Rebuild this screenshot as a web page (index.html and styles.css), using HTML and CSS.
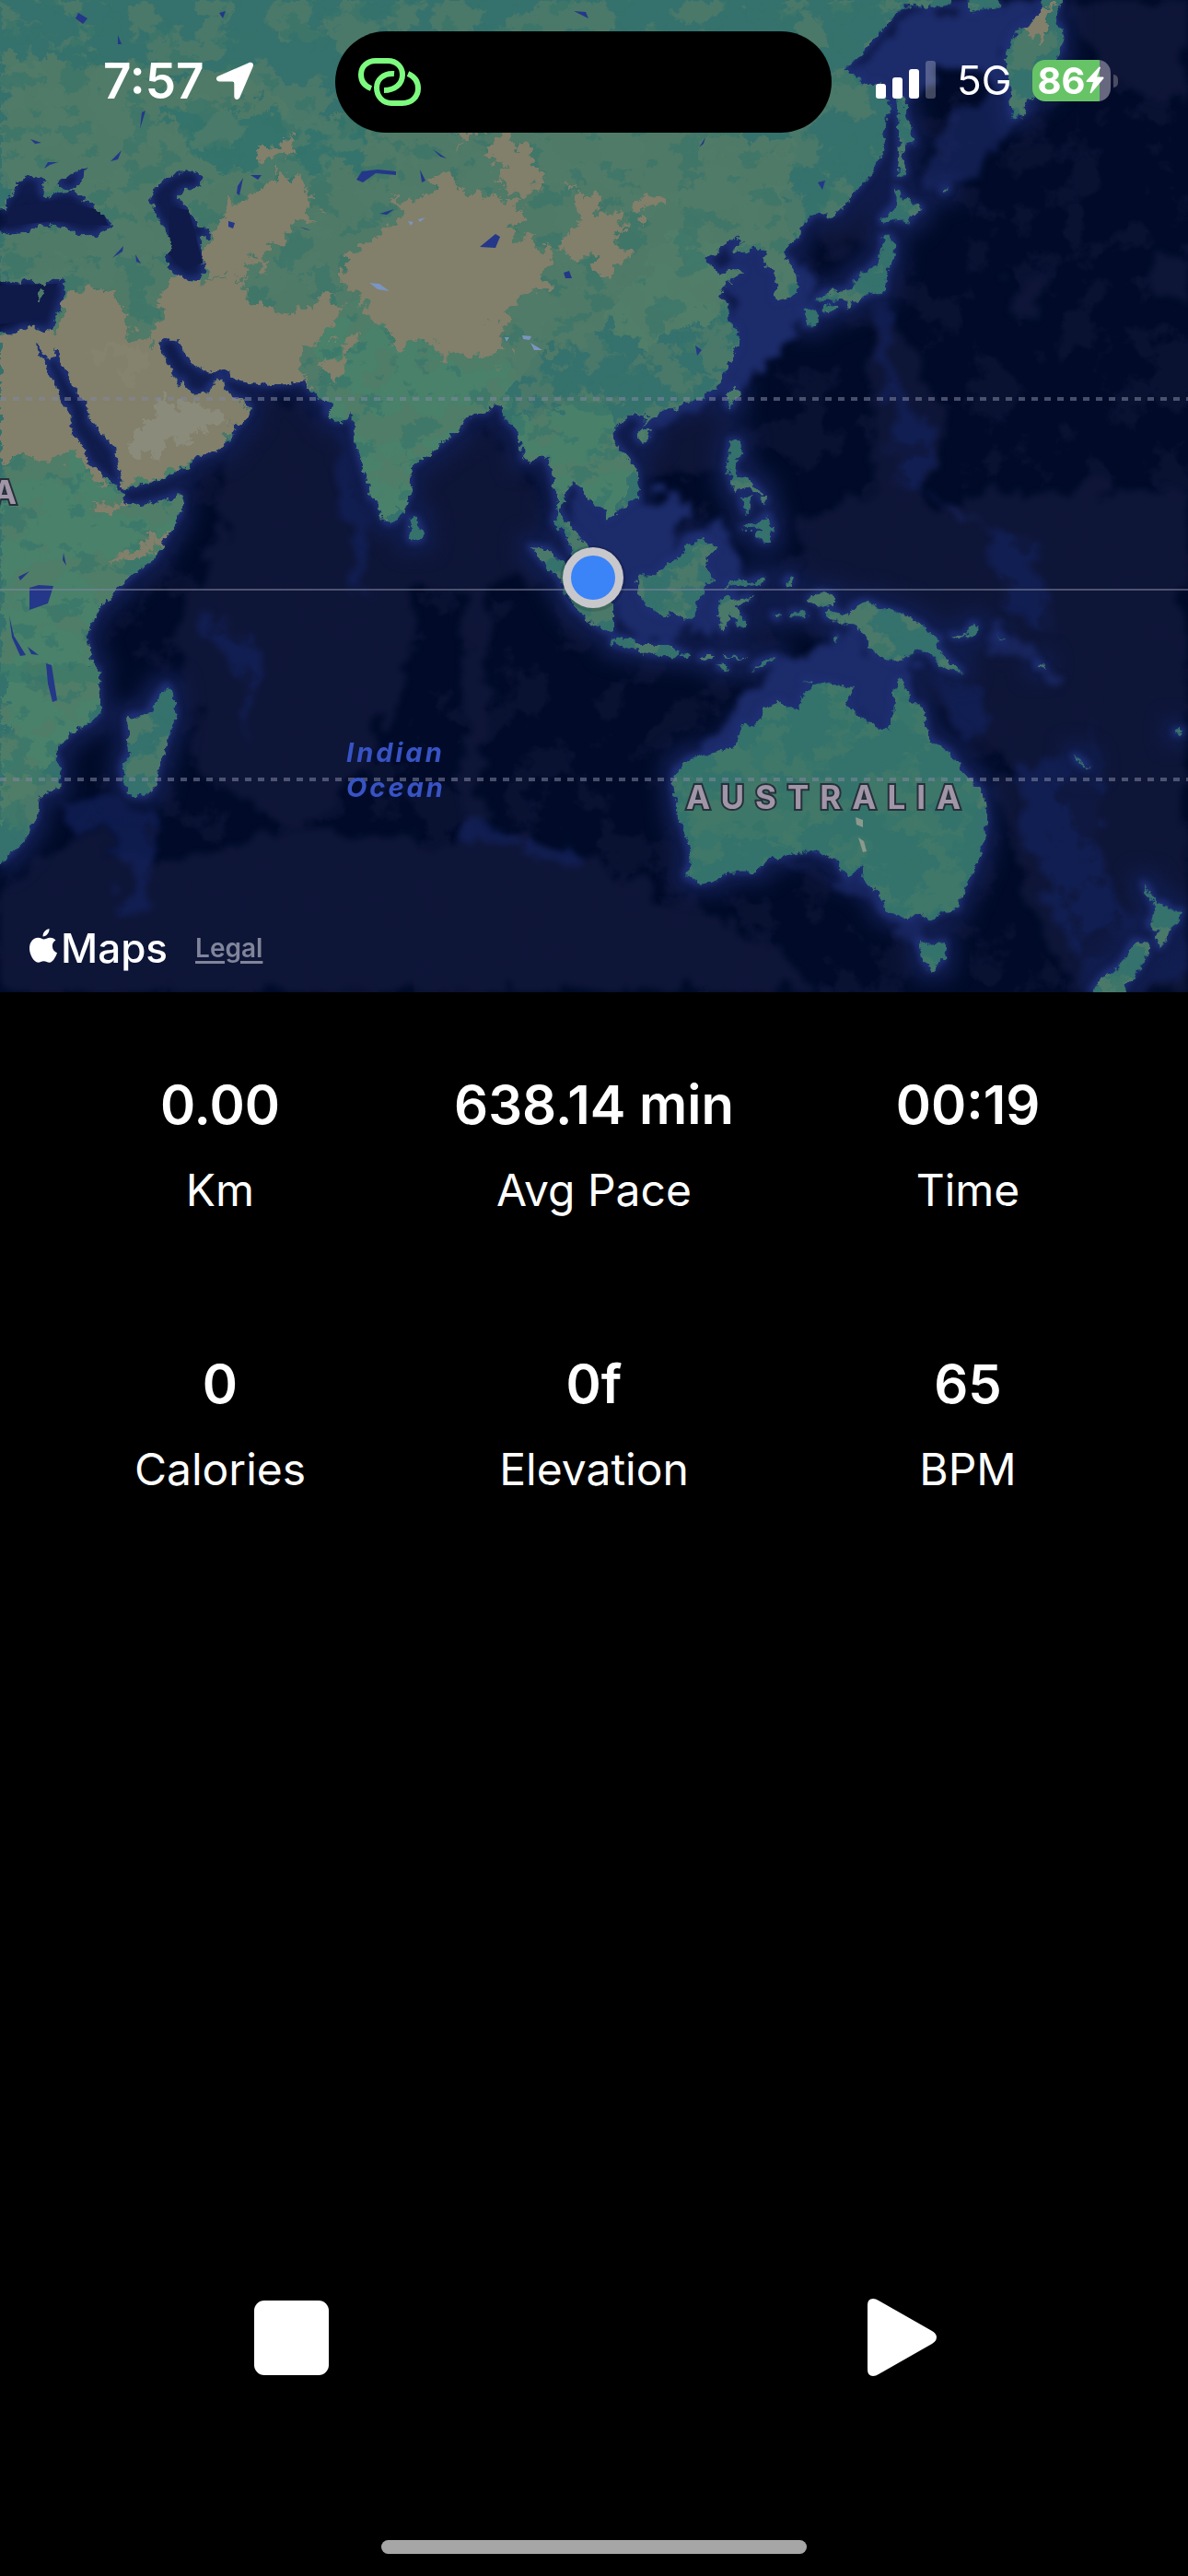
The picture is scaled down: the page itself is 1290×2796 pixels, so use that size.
FILE: index.html
```html
<!DOCTYPE html>
<html lang="en">
<head>
<meta charset="utf-8">
<meta name="viewport" content="width=device-width, initial-scale=1">
<title>Workout</title>
<link rel="stylesheet" href="styles.css">
</head>
<body>
<main class="screen">
  <section class="map" aria-label="Map">
    <svg class="map-canvas" viewBox="0 0 1290 1077" preserveAspectRatio="xMidYMid slice">
      <defs>
        <filter id="coast" x="0" y="0" width="1290" height="1077" filterUnits="userSpaceOnUse" color-interpolation-filters="sRGB">
          <feTurbulence type="fractalNoise" baseFrequency="0.12" numOctaves="3" seed="4"/>
          <feDisplacementMap in="SourceGraphic" scale="11" xChannelSelector="R" yChannelSelector="G"/>
        </filter>
        <filter id="shelf" x="0" y="0" width="1290" height="1077" filterUnits="userSpaceOnUse" color-interpolation-filters="sRGB">
          <feMorphology in="SourceAlpha" operator="dilate" radius="3"/>
          <feGaussianBlur stdDeviation="3" result="b"/>
          <feFlood flood-color="#1e2f74"/>
          <feComposite in2="b" operator="in"/>
        </filter>
        <filter id="slope" x="0" y="0" width="1290" height="1077" filterUnits="userSpaceOnUse" color-interpolation-filters="sRGB">
          <feMorphology in="SourceAlpha" operator="dilate" radius="14"/>
          <feGaussianBlur stdDeviation="9" result="b"/>
          <feFlood flood-color="#101c4c"/>
          <feComposite in2="b" operator="in"/>
        </filter>
        <filter id="soft" x="0" y="0" width="1290" height="1077" filterUnits="userSpaceOnUse" color-interpolation-filters="sRGB">
          <feTurbulence type="fractalNoise" baseFrequency="0.03" numOctaves="4" seed="9" result="n"/>
          <feDisplacementMap in="SourceGraphic" in2="n" scale="50" xChannelSelector="R" yChannelSelector="G"/>
          <feGaussianBlur stdDeviation="3"/>
        </filter>
        <filter id="rough" x="0" y="0" width="1290" height="1077" filterUnits="userSpaceOnUse" color-interpolation-filters="sRGB">
          <feTurbulence type="fractalNoise" baseFrequency="0.045" numOctaves="4" seed="12"/>
          <feDisplacementMap in="SourceGraphic" scale="45" xChannelSelector="R" yChannelSelector="G"/>
        </filter>
        <filter id="grass" x="0" y="0" width="1290" height="1077" filterUnits="userSpaceOnUse" color-interpolation-filters="sRGB">
          <feTurbulence type="fractalNoise" baseFrequency="0.02 0.025" numOctaves="5" seed="21"/>
          <feColorMatrix values="0 0 0 0 .32  0 0 0 0 .49  0 0 0 0 .41  22 0 0 0 -11"/>
        </filter>
        <filter id="forest" x="0" y="0" width="1290" height="1077" filterUnits="userSpaceOnUse" color-interpolation-filters="sRGB">
          <feTurbulence type="fractalNoise" baseFrequency="0.03 0.04" numOctaves="4" seed="5"/>
          <feColorMatrix values="0 0 0 0 .2  0 0 0 0 .45  0 0 0 0 .42  0 26 0 0 -15"/>
        </filter>
        <filter id="seabed" x="0" y="0" width="1290" height="1077" filterUnits="userSpaceOnUse" color-interpolation-filters="sRGB">
          <feTurbulence type="fractalNoise" baseFrequency="0.02" numOctaves="5" seed="31"/>
          <feColorMatrix values="0 0 0 0 .06  0 0 0 0 .085  0 0 0 0 .22  9 0 0 0 -4.8"/>
        </filter>
        <g id="land">
          <svg x="0" y="0" width="430" height="540" viewBox="0 0 1290 1568" preserveAspectRatio="none" overflow="visible">
            <path fill-rule="evenodd" d="M-30-30H1293V1571H1208L1190 1500 1165 1420 1150 1350 1148 1310 1137 1290 1130 1320 1100 1328 1060 1295 1085 1275 1050 1262 1010 1225 988 1200 930 1208 870 1212 800 1200 748 1190 745 1160 728 1157 700 1168 665 1168 610 1130 575 1070 540 1065 515 1080 522 1110 545 1150 565 1180 580 1218 595 1190 605 1230 640 1242 670 1238 700 1200 722 1185 728 1220 755 1248 790 1258 815 1285 800 1310 765 1350 745 1385 700 1418 625 1445 610 1468 520 1505 440 1530 398 1540 385 1480 370 1410 330 1365 288 1320 285 1280 235 1210 190 1130 178 1092 165 1130 150 1128 120 1080 110 1085 140 1130 170 1195 195 1265 225 1290 235 1365 265 1405 290 1460 345 1510 388 1540 395 1571H-30V1048L45 1050 80 1030 165 1043 180 1000 205 940 205 875 175 880 130 895 90 872 60 888-30 872Z
            M-30 660L18 655 18 625 45 600 50 570 100 545 115 560 150 565 130 585 145 620 190 603 235 600 290 635 350 685 355 715 315 738 260 738 190 712 130 706 80 730 30 738-30 720Z
            M178 568L240 540 290 524 262 560 250 590 222 595 210 592 185 585Z
            M485 618L510 580 560 548 610 530 650 545 652 590 600 595 575 622 600 640 610 670 635 685 640 708 665 705 688 745 648 750 660 790 665 865 640 880 600 878 540 840 540 800 558 765 545 740 520 700 500 660Z"/>
            <path d="M113 925L130 915 147 925 130 942ZM550 1571L575 1555 592 1571Z"/>
          </svg>
          <svg x="430" y="0" width="430" height="540" viewBox="0 0 1290 1568" preserveAspectRatio="none" overflow="visible">
            <path d="M-3-30H1293V760L1275 765 1258 790 1270 815 1293 830V925L1240 945 1232 930 1235 870 1225 845 1198 835 1205 785 1160 778 1125 795 1100 790 1125 755 1100 742 1060 768 1045 795 1000 812 1030 835 1045 860 1095 845 1128 855 1075 890 1047 928 1080 970 1085 1010 1112 1040 1112 1090 1075 1160 1045 1215 1000 1250 930 1272 850 1300 820 1315 805 1335 810 1305 772 1300 735 1325 702 1360 712 1395 765 1455 785 1490 790 1571H630L600 1530 575 1515 555 1540 548 1571H522L512 1520 500 1470 475 1425 440 1450 412 1445 408 1400 390 1350 355 1320 345 1280 318 1268 290 1300 250 1300 220 1318 210 1345 140 1400 80 1445 45 1470 48 1540 38 1571H-3Z"/>
            <path d="M780 1370L800 1350 830 1350 822 1378 800 1393ZM1078 1240L1105 1215 1112 1240 1088 1285 1075 1265ZM1088 1385L1118 1390 1125 1430 1105 1450 1100 1490 1160 1520 1195 1560 1150 1535 1100 1545 1090 1510 1075 1470Z"/>
          </svg>
          <svg x="860" y="0" width="430" height="540" viewBox="0 0 1290 1568" preserveAspectRatio="none" overflow="visible">
            <path d="M-3-30H520L515 12 450 20 370 15 330 40 300 80 240 150 165 220 205 235 255 275 280 260 322 330 300 380 298 470 280 500 240 560 180 625 150 665 120 680 80 665 25 715 20 745-3 760ZM-3 830L15 870 12 915-3 925ZM335 290L368 310 370 370 398 450 370 450 355 480 370 545 338 555 348 480 345 400ZM335 590L370 630 425 655 400 670 375 700 350 695 320 680 298 705 288 690 320 660 335 640ZM290 745L315 742 335 770 330 810 310 850 300 920 270 920 230 935 170 970 180 945 120 940 65 950 110 918 185 910 210 870 250 850 285 810 292 780ZM30 975L60 965 80 990 65 1025 40 1025 50 1005ZM100 975L120 955 150 960 130 978 105 990ZM820-30H885L850 60 880 95 880 140 865 175 835 250 790 300 760 310 750 350 725 375 712 350 705 250 690 200 697 150 730 95 785 65 805 40ZM560-30H660L675 20 620 25 585 40ZM485 600L510 590 495 605Z"/>
          </svg>
          <svg x="0" y="540" width="430" height="540" viewBox="0 0 1290 1568" preserveAspectRatio="none" overflow="visible">
            <path d="M-30-3H395L415 25 480 18 550 0 592-3 590 40 540 120 500 190 430 240 370 295 315 350 280 430 300 530 320 545 325 675 290 710 235 735 175 795 195 850 190 910 125 938 120 1000 70 1080 0 1150H-30ZM1222-3L1245 60 1265 83 1293 70V-3ZM543 590L560 620 572 680 550 740 520 830 500 910 470 940 430 938 405 905 395 850 420 800 412 700 430 685 480 680 510 630Z"/>
          </svg>
          <svg x="430" y="540" width="430" height="540" viewBox="0 0 1290 1568" preserveAspectRatio="none" overflow="visible">
            <path d="M-3-3H38L20 50-3 65ZM45 60L65 65 87 110 82 130 55 138 40 120ZM520-3H540L532 40 565 90 625 155 640 210 600 200 565 165 555 120 512 75 525 40ZM638-3H780L725 35 685 70 680 35 645 20ZM435 152L490 158 560 220 640 290 705 330 705 420 690 425 640 395 580 345 545 290 530 250 480 205ZM700 455L715 437 760 445 800 462 880 462 920 480 915 498 850 495 780 480 720 465ZM930 488L950 492 945 500 930 498ZM985 505L1015 490 1035 500 1005 510ZM1065 497L1140 500 1110 507 1070 503ZM1045 525L1065 522 1082 540 1065 540ZM1160 540L1180 518 1245 497 1200 525ZM782 260L800 242 845 245 880 205 920 185 965 135 990 122 1010 140 1045 155 1010 180 1005 215 1035 262 1005 265 1000 300 975 335 965 380 930 378 900 360 870 370 820 350 790 300ZM1065 280L1080 265 1110 260 1150 268 1195 250 1190 268 1150 278 1100 272ZM1060 310L1080 308 1105 325 1155 308 1150 318 1100 340 1135 390 1120 405 1085 360 1070 420 1055 410 1055 375 1040 365ZM1265 270L1280 250 1293 255 1285 275ZM1122 95L1170 85 1210 50 1230 100 1205 140 1175 120 1185 95ZM1120-3H1150V20L1140 50 1130 30ZM1180-3H1205V20ZM1225 365L1250 370 1240 382ZM1293 1120L1210 1135 1160 1180 1080 1180 1020 1210 985 1215 940 1190 955 1160 955 1110 935 1040 915 990 900 900 910 860 960 820 1100 785 1125 710 1165 720 1195 665 1245 638 1293 665Z"/>
          </svg>
          <svg x="860" y="540" width="430" height="540" viewBox="0 0 1290 1568" preserveAspectRatio="none" overflow="visible">
            <path d="M-3 665L20 665 30 620 60 595 105 578 150 592 195 598 180 630 170 655 220 690 290 730 310 728 328 680 332 600 350 562 370 600 385 645 425 660 445 760 510 800 560 870 620 930 632 1020 615 1110 580 1190 545 1260 540 1295 490 1300 445 1330 410 1305 380 1330 300 1300 280 1245 240 1215 225 1190 235 1150 200 1180 178 1200 140 1135 60 1110-3 1120ZM410 1395L450 1408 498 1400 495 1450 455 1488 425 1455ZM50 320L95 297 135 310 135 338 90 338ZM100 360L120 348 180 375 200 340 240 325 290 345 350 362 430 405 435 420 485 445 465 460 510 515 558 552 490 535 450 490 410 478 370 495 350 515 320 510 260 480 235 425 200 400 155 390 110 378ZM510 430L560 435 590 395 602 405 585 432 540 442ZM-3 358L40 360 48 375-3 372ZM35 578L65 572 60 582ZM140 435L152 430 145 455ZM665 428L692 455 672 440ZM795 525L820 530 800 533ZM915 808L972 852 930 832ZM1245 735L1272 732 1268 745 1250 745ZM1140 1210L1160 1230 1180 1275 1205 1275 1235 1300 1270 1300 1255 1335 1230 1355 1215 1395 1195 1418 1185 1385 1195 1365 1158 1345 1178 1320 1175 1280ZM1115 1395L1160 1405 1155 1440 1120 1495 1085 1530 1070 1600H975V1558L1010 1510 1070 1470Z"/>
          </svg>
        </g>
        <mask id="on-land" class="alpha-mask" maskUnits="userSpaceOnUse" x="0" y="0" width="1290" height="1077"><use href="#land"/></mask>
      </defs>

      <rect width="1290" height="1077" fill="#010b29"/>
      <!-- mid-depth basins and ridges -->
      <g filter="url(#soft)" fill="#0e1638">
        <path d="M270 420L400 470 450 560 450 720 390 840 330 900 230 850 190 700 240 560Z"/>
        <path d="M430 470L560 480 590 620 520 640 440 640Z"/>
        <path d="M0 960L90 900 170 940 330 900 480 920 560 900 700 960 800 1000 900 1077H0Z"/>
        <path d="M505 640L530 640 525 960 500 960Z"/>
        <path d="M650 420L800 430 780 520 650 520ZM890 210L980 190 960 260 890 270Z"/>
        <path d="M940 320L990 360 1020 470 1000 540 1290 530V900L1150 880 1060 800 900 700 860 560 960 540Z"/>
        <path d="M1080 850L1290 850V1077H1170L1110 960ZM1160 0H1290V110L1200 90ZM1250 260L1290 300V330L1250 320ZM1100 305L1140 300 1120 345 1095 345Z"/>
        <path d="M880 700L1000 720 1010 780 900 770Z"/>
      </g>
      <g filter="url(#soft)" fill="#13215a" opacity=".75">
        <path d="M360 440L400 460 410 560 385 650 375 560ZM215 660L270 690 290 740 270 800 265 740 230 690Z"/>
        <path d="M940 320L965 330 975 420 1010 470 1000 540 975 520 965 430Z"/>
        <path d="M1070 560L1130 600 1140 680 1080 660ZM1100 820L1190 830 1200 960 1290 1010V1060L1190 1077 1120 940Z"/>
        <path d="M1010 700L1080 780 1060 810 1010 750ZM60 880L130 860 180 900 160 960 140 1010 130 920Z"/>
        <path d="M500 890L620 920 640 940 500 910ZM1140 0L1160 60H1130ZM1190 760L1195 920 1180 900Z"/>
      </g>
      <rect width="1290" height="1077" filter="url(#seabed)" opacity=".65"/>
      <use href="#land" filter="url(#slope)"/>
      <!-- shallow seas -->
      <g fill="#1c2b6a" filter="url(#soft)">
        <path d="M765 245L850 270 880 310 870 350 830 400 790 430 690 460 660 440 770 420 800 330Z"/>
        <path d="M615 520L700 540 750 530 730 600 790 560 810 650 770 680 700 700 660 650 625 590Z"/>
        <path d="M990 10L1140 0 1100 50 1095 110 1040 70 980 120 930 80Z"/>
        <path d="M820 740L900 700 930 690 990 710 980 790 930 780 840 790 740 850Z"/>
        <path d="M1000 520L1070 570 1040 560ZM1080 680L1150 725 1140 735 1080 700Z" opacity=".7"/>
        <path d="M740 920L830 930 940 960 1000 990 1010 1040 990 1020 900 950Z" opacity=".7"/>
        <path d="M1030 115L1120 105 1060 190 1000 215Z" opacity=".6"/>
      </g>
      <use href="#land" filter="url(#shelf)"/>
      <path d="M10 225L55 218 110 228 118 245 60 240 8 245ZM185 225L205 228 220 285 200 293 182 275ZM0 310L62 308 50 345 0 352Z" fill="#101a49"/>

      <g filter="url(#coast)">
        <g transform="translate(1 1)">
          <use href="#land" fill="#35716d"/>
          <g mask="url(#on-land)">
            <g filter="url(#rough)">
              <path d="M0 60L120 70 260 80 330 130 600 130 760 140 860 150 850 330 700 340 600 380 500 430 420 420 0 400Z" fill="#4e7a67"/>
              <path d="M330 350L400 320 560 390 540 470 440 560H380ZM0 470H220V620L0 900Z" fill="#49816a"/>
              <path d="M560 460L640 430 690 480 680 560H560Z" fill="#48806a"/>
              <path d="M730 250L800 260 780 340 700 370 650 350Z" fill="#507e69"/>
              <path d="M740 860L830 850 930 870 860 910 750 900ZM890 740L930 770 910 790ZM980 860L1030 840 1010 930Z" fill="#4a7c67" opacity=".8"/>
              <path d="M170 125L330 120 340 190 250 190ZM330 130L400 140 390 180 320 180Z" fill="#34746c"/>
            </g>
            <rect width="1290" height="840" filter="url(#grass)" opacity=".75"/>
            <rect width="1290" height="1077" filter="url(#forest)" opacity=".55"/>
            <path d="M0 720H600V760H730L1060 720V1077H640V740H0Z" fill="#34766a" opacity=".45"/>
            <g filter="url(#rough)" fill="#827f6b">
              <path d="M-20 361L50 358 70 331 90 312 117 317 133 334 143 358 170 365 170 331 190 303 227 300 240 293 260 296 267 313 293 331 310 344 330 334 355 322 370 327 347 365 327 379 327 413 345 430 233 450 273 444 233 495 147 527 133 530 117 482 120 530 100 510 80 496 50 503 27 492-20 510Z"/>
              <path d="M227 238L247 213 277 220 290 193 313 182 333 213 347 238 320 241 310 269 277 272 287 293 260 289 243 296 222 296 220 272 230 255ZM287 158L323 148 313 172 283 172Z"/>
              <path d="M377 275L400 255 430 241 430 213 463 207 480 193 500 196 500 210 567 210 553 248 573 262 600 272 593 293 603 310 557 317 550 341 540 355 557 382 547 393 490 382 450 368 430 376 403 337 373 306Z"/>
              <path d="M610 272L630 241 633 210 657 213 643 227 680 241 667 255 673 275 663 293 640 293 633 275ZM533 155L557 151 580 172 577 207 540 200 550 186 530 176ZM690 215L715 212 705 235 685 230ZM490 142L515 145 500 155ZM610 195L630 205 620 210Z"/>
              <path d="M147 588L180 579 167 605 120 604ZM105 540L133 540 125 555 110 555ZM350 385L385 362 370 400 350 415ZM1105 8L1145 5 1125 50Z"/>
            </g>
            <path d="M143 482L173 427 237 444 230 465 160 491Z" fill="#8b8b7b" filter="url(#rough)"/>
            <path d="M90 380L140 370 160 395 150 430 130 390Z" fill="#87866f" opacity=".6" filter="url(#rough)"/>
          </g>
        </g>
      </g>
      <g fill="#243789">
        <path d="M32 638L42 635 58 636 52 655 32 662ZM10 668L15 690 28 711 22 712 13 692ZM50 720L56 722 62 760 57 762 52 742ZM30 702L42 711 34 710ZM20 626L32 620 22 630ZM69 600L72 614 68 608ZM85 14L95 20 90 26 82 20ZM238 14L245 12 242 20ZM128 38L132 48 128 48ZM154 122L158 120 152 140ZM33 151L45 155 38 156ZM120 175L132 163 128 173ZM48 183L52 176 63 176 54 179ZM272 190L284 190 280 195ZM258 202L264 193 260 212 257 210ZM248 240L255 242 253 248 248 246ZM387 195L393 186 410 184 430 186V190L408 188 394 198ZM412 232L428 227 420 233ZM325 246L338 250 332 249ZM122 280L134 267 133 273ZM147 276L153 286 148 284ZM521 268L538 254 543 257 538 269ZM612 296L618 294 621 302 614 302ZM456 184L462 196 458 198ZM470 162L485 172 478 170ZM759 160L766 149 764 156ZM888 198L896 196 893 206ZM755 375L762 380 757 386ZM623 12L636 13 639 20Z"/>
      </g>
      <g fill="#7a95c0">
        <path d="M401 307L412 308 423 316 410 314ZM567 364L577 365 575 369 568 368ZM576 372L589 380 580 380ZM443 240L449 241 446 245ZM454 238L462 236 456 241ZM548 366L553 366 550 371Z"/>
        <path d="M929 887L937 890 937 898 930 895ZM932 909L938 913 941 924 937 925Z" fill="#8b9a8d"/>
      </g>
      <g stroke="#8287a0" stroke-opacity=".55" stroke-width="2" fill="none">
        <path d="M0 433H1290M0 846H1290" stroke-width="4" stroke-dasharray="7 7"/>
        <path d="M0 640H1290"/>
      </g>
      <g class="region">
        <text x="-8" y="547">A</text>
        <text class="region-wide" x="745" y="878">AUSTRALIA</text>
      </g>
      <g class="ocean">
        <text x="376" y="827">Indian</text>
        <text x="376" y="865">Ocean</text>
      </g>
      <circle cx="644" cy="628" r="36" fill="#000" opacity=".12"/>
      <circle cx="644" cy="627" r="33" fill="#c8c7cc"/>
      <circle cx="644" cy="627" r="24" fill="#3a84f8"/>
    </svg>

    <header class="status">
      <div class="status-left">
        <time class="clock">7:57</time>
        <svg class="arrow" viewBox="0 0 42 42" aria-hidden="true"><path fill="#fff" d="M36 1.200C39.500-.3 42 2 40.600 5.500L26.500 38.500C24.800 42.300 20.300 41.500 20.300 37.500V23.500Q20.300 21.500 18.300 21.500H4.500C.5 21.500-.5 17 3.300 15.400Z"/></svg>
      </div>
      <div class="island">
        <svg class="link" viewBox="0 0 70 56" fill="none" stroke="#7dfb7f" stroke-width="6" aria-hidden="true">
          <path d="M15 35C7 32 4 26 4 20 4 11 11 5 20 5H33C43 5 49 12 49 20 49 30 41 37 29 37"/>
          <path d="M40 19C28 18 21 26 21 34 21 44 28 51 37 51H49C59 51 66 44 66 35 66 28 62 22 55 19"/>
        </svg>
      </div>
      <div class="status-right">
        <svg class="signal" viewBox="0 0 65 42" fill="#fff" aria-hidden="true"><rect y="25" width="11" height="16" rx="3"/><rect x="18" y="18" width="11" height="23" rx="3"/><rect x="36" y="9" width="11" height="32" rx="3"/><rect x="54" width="11" height="41" rx="3" opacity=".25"/></svg>
        <span class="network">5G</span>
        <div class="battery">
          <span class="charge">86</span>
          <svg class="bolt" viewBox="0 0 20 30" aria-hidden="true"><path fill="#fff" d="M14.500.5L.8 15.500Q0 17 1.500 17H8L4.500 28.500Q5 30 6.500 28.500L19.500 13Q20 11.500 18.500 11.500H12L16 1.500Q15.500 0 14.500.5Z"/></svg>
        </div>
      </div>
    </header>

    <footer class="credits">
      <span class="brand">
        <svg class="apple" viewBox="0 0 30 37" aria-hidden="true"><path fill="#fff" d="M21.500 0C21.800 4.500 18.500 8.300 14.600 8.500 14.200 4.300 17.600.7 21.500 0ZM28.500 12.600C26 14.200 24.800 16.300 24.900 19.200 25 22.500 27 25 30 26.200 28.500 30.400 25.500 36.500 21.700 36.700 19.400 36.800 18.300 35.300 15.500 35.300S11.500 36.700 9.400 36.700C5 36.700 0 28.500 0 21.300 0 14 4.600 9.800 9.300 9.800 12 9.800 14 11.500 15.600 11.500 17.200 11.500 19.600 9.600 22.700 9.700 25 9.800 27.200 10.800 28.500 12.600Z"/></svg>Maps</span>
      <a class="legal" href="#">Legal</a>
    </footer>
  </section>

  <dl class="stats">
    <div class="stat"><dd>0.00</dd><dt>Km</dt></div>
    <div class="stat"><dd>638.14 min</dd><dt>Avg Pace</dt></div>
    <div class="stat"><dd>00:19</dd><dt>Time</dt></div>
    <div class="stat"><dd>0</dd><dt>Calories</dt></div>
    <div class="stat"><dd>0f</dd><dt>Elevation</dt></div>
    <div class="stat"><dd>65</dd><dt>BPM</dt></div>
  </dl>

  <div class="controls">
    <button class="control" type="button" aria-label="Stop"><svg viewBox="0 0 84 84"><rect x="1" y="2" width="81" height="81" rx="11" fill="#fff"/></svg></button>
    <button class="control" type="button" aria-label="Resume"><svg viewBox="0 0 84 84"><path fill="#fff" d="M5 7Q5 0 11 0 14 0 17 2L75 35Q80 38 80 42T75 49L17 82Q14 84 11 84 5 84 5 77Z"/></svg></button>
  </div>
  <div class="home-bar"></div>
</main>
</body>
</html>
```
FILE: styles.css
```css
* { box-sizing: border-box; }

body {
  margin: 0;
  background: #000;
  color: #fff;
  font-family: Inter, "Liberation Sans", sans-serif;
}

.screen {
  display: flex;
  flex-direction: column;
  min-height: 100vh;
}

.map {
  position: relative;
  aspect-ratio: 1290 / 1077;
  overflow: hidden;
}

.map-canvas {
  display: block;
  width: 100%;
  height: 100%;
}

.alpha-mask { mask-type: alpha; }

.region {
  font-size: 35px;
  font-weight: 700;
  fill: #a195a8;
  stroke: #27303a;
  stroke-width: 4px;
  paint-order: stroke;
}

.region-wide { letter-spacing: 12px; }

.ocean {
  font-size: 29px;
  font-weight: 700;
  font-style: italic;
  letter-spacing: 3px;
  fill: #3853c4;
}

.status {
  position: absolute;
  inset: 34px 0 auto;
  display: grid;
  grid-template-columns: 364fr 539px 387fr;
  height: 110px;
}

.status-left {
  display: flex;
  align-items: center;
  gap: 12px;
  padding: 0 0 2px 112px;
}

.clock {
  font-size: 53px;
  font-weight: 600;
  line-height: 60px;
}

.arrow {
  width: 42px;
  height: 42px;
}

.island {
  display: flex;
  align-items: center;
  padding-left: 24px;
  border-radius: 55px;
  background: #000;
}

.link {
  width: 70px;
  height: 56px;
}

.status-right {
  display: flex;
  align-items: center;
  padding: 0 0 4px 48px;
}

.signal {
  width: 65px;
  height: 42px;
}

.network {
  margin-left: 23px;
  font-size: 44px;
  line-height: 56px;
}

.battery {
  position: relative;
  display: flex;
  align-items: center;
  width: 85px;
  height: 45px;
  margin-left: 22px;
  padding-left: 6px;
  border-radius: 14px;
  background: linear-gradient(90deg, #67c466 73px, #67677f 73px);
}

.battery::after {
  content: "";
  position: absolute;
  left: 88px;
  top: 16px;
  width: 5px;
  height: 14px;
  border-radius: 0 5px 5px 0;
  background: #4c4c62;
}

.charge {
  font-size: 40px;
  font-weight: 700;
  line-height: 45px;
}

.bolt {
  width: 20px;
  height: 30px;
}

.credits {
  position: absolute;
  left: 32px;
  bottom: 20px;
  display: flex;
  align-items: center;
  gap: 30px;
}

.brand {
  font-size: 44px;
  font-weight: 500;
  line-height: 56px;
}

.apple {
  width: 30px;
  height: 37px;
  margin-right: 4px;
}

.legal {
  color: #80859a;
  font-size: 28px;
  font-weight: 600;
  line-height: 32px;
  text-underline-offset: 4px;
  text-decoration-thickness: 3px;
}

.stats {
  display: grid;
  grid-template-columns: repeat(3, 1fr);
  row-gap: 144px;
  margin: 0;
  padding: 86px 36px 0;
  text-align: center;
}

.stat {
  display: flex;
  flex-direction: column;
  gap: 27px;
}

.stat dd {
  margin: 0;
  font-size: 58px;
  font-weight: 600;
  line-height: 72px;
}

.stat dt {
  font-size: 48px;
  line-height: 60px;
}

.controls {
  display: flex;
  justify-content: space-between;
  margin-top: auto;
  padding: 0 269px 178px 275px;
}

.control {
  width: 84px;
  height: 84px;
  padding: 0;
  border: 0;
  background: none;
}

.control svg {
  display: block;
  width: 100%;
  height: 100%;
}

.home-bar {
  width: 462px;
  height: 15px;
  margin: 0 auto 24px;
  border-radius: 8px;
  background: #a6a6a6;
}
```
